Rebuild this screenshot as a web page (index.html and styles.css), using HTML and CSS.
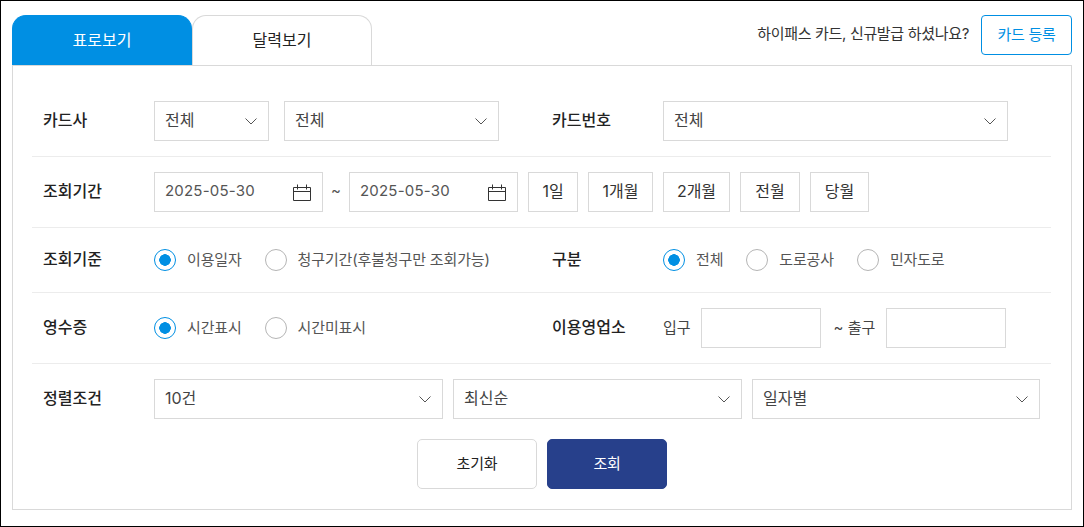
FILE: index.html
```html
<!DOCTYPE html>
<html lang="ko">
<head>
<meta charset="utf-8">
<title>하이패스 이용내역 조회</title>
<link rel="stylesheet" href="styles.css">
</head>
<body>
<svg class="defs" width="0" height="0" aria-hidden="true">
  <symbol id="chev" viewBox="0 0 12 7"><path d="M.5.5 6 6 11.500.5" fill="none" stroke="#555" stroke-width="1"/></symbol>
  <symbol id="cal" viewBox="0 0 18 17"><path d="M.5 3.500h17v13H.5zM.5 7.500h17M4.500 .5v5M13.500 .5v5" fill="none" stroke="#333" stroke-width="1"/></symbol>
</svg>
<main class="page">
  <header class="top">
    <nav class="tabs">
      <span class="tab tab-on">표로보기</span>
      <span class="tab">달력보기</span>
    </nav>
    <div class="notice">
      <span class="notice-text">하이패스 카드, 신규발급 하셨나요?</span>
      <span class="register">카드 등록</span>
    </div>
  </header>
  <section class="panel">
    <div class="row row-two">
      <div class="field">
        <span class="label">카드사</span>
        <div class="select w115">전체<svg class="chev"><use href="#chev"/></svg></div>
        <div class="select w215">전체<svg class="chev"><use href="#chev"/></svg></div>
      </div>
      <div class="field">
        <span class="label">카드번호</span>
        <div class="select w345">전체<svg class="chev"><use href="#chev"/></svg></div>
      </div>
    </div>
    <div class="row">
      <div class="field">
        <span class="label">조회기간</span>
        <div class="date">2025-05-30<svg class="cal"><use href="#cal"/></svg></div>
        <span class="tilde">~</span>
        <div class="date">2025-05-30<svg class="cal"><use href="#cal"/></svg></div>
        <span class="chip w50">1일</span>
        <span class="chip w65">1개월</span>
        <span class="chip w67">2개월</span>
        <span class="chip w60">전월</span>
        <span class="chip w59">당월</span>
      </div>
    </div>
    <div class="row row-two row-radio">
      <div class="field">
        <span class="label">조회기준</span>
        <span class="radio radio-on"><i></i>이용일자</span>
        <span class="radio"><i></i>청구기간(후불청구만 조회가능)</span>
      </div>
      <div class="field">
        <span class="label">구분</span>
        <span class="radio radio-on"><i></i>전체</span>
        <span class="radio"><i></i>도로공사</span>
        <span class="radio"><i></i>민자도로</span>
      </div>
    </div>
    <div class="row row-two">
      <div class="field">
        <span class="label">영수증</span>
        <span class="radio radio-on"><i></i>시간표시</span>
        <span class="radio"><i></i>시간미표시</span>
      </div>
      <div class="field">
        <span class="label">이용영업소</span>
        <span class="plain">입구</span>
        <span class="input"></span>
        <span class="plain plain-exit">~ 출구</span>
        <span class="input"></span>
      </div>
    </div>
    <div class="row row-last">
      <div class="field">
        <span class="label">정렬조건</span>
        <div class="select w289">10건<svg class="chev"><use href="#chev"/></svg></div>
        <div class="select w289">최신순<svg class="chev"><use href="#chev"/></svg></div>
        <div class="select w288">일자별<svg class="chev"><use href="#chev"/></svg></div>
      </div>
    </div>
    <div class="actions">
      <span class="btn">초기화</span>
      <span class="btn btn-main">조회</span>
    </div>
  </section>
</main>
</body>
</html>
```
FILE: styles.css
```css
* { box-sizing: border-box; }
html, body { margin: 0; height: 100%; overflow: hidden; background: #fff; }
body {
  font-family: Inter, "Noto Sans CJK KR", sans-serif;
  font-size: 15px;
  color: #333;
}
.defs { position: absolute; }
.page {
  width: 1084px;
  height: 527px;
  border: 1px solid #000;
  padding: 14px 11px 0;
}
.top { display: flex; justify-content: space-between; height: 50px; }
.tabs { display: flex; }
.tab {
  width: 180px;
  height: 51px;
  display: flex;
  align-items: center;
  justify-content: center;
  padding-bottom: 5px;
  border: 1px solid #d9d9d9;
  border-bottom: 0;
  border-radius: 14px 14px 0 0;
  background: #fff;
  color: #222;
  font-size: 16px;
}
.tab-on {
  background: #008fe3;
  border-color: #008fe3;
  color: #fff;
}
.notice { display: flex; gap: 12px; height: 40px; align-items: center; }
.notice-text { color: #333; letter-spacing: -0.32px; padding-bottom: 5px; }
.register {
  width: 91px;
  height: 40px;
  display: flex;
  align-items: center;
  justify-content: center;
  padding-bottom: 4px;
  border: 1px solid #008fe3;
  border-radius: 4px;
  color: #008fe3;
  letter-spacing: -0.3px;
}
.panel {
  height: 445px;
  margin-top: 0;
  padding: 20px 20px 0 19px;
  border: 1px solid #d9d9d9;
  position: relative;
  background: #fff;
}
.row {
  padding: 15px 0 15px 11px;
  border-bottom: 1px solid #ececec;
}
.row-two { display: grid; grid-template-columns: 509px 1fr; }
.row-radio { padding-top: 20px; padding-bottom: 20px; }
.row-radio .field { height: 24px; }
.row-last { border-bottom: 0; padding-bottom: 0; }
.field { display: flex; align-items: center; gap: 10px; }
.row-two .field { gap: 15px; }
.label {
  width: 111px;
  margin-right: -10px;
  padding-bottom: 4px;
  flex: none;
  font-size: 16px;
  font-weight: 500;
  color: #222;
}
.row-two .label { margin-right: -15px; }
.select, .date, .input, .chip {
  height: 40px;
  border: 1px solid #d9d9d9;
  background: #fff;
  display: flex;
  align-items: center;
  flex: none;
  padding-bottom: 4px;
}
.select, .date {
  justify-content: space-between;
  padding-left: 10px;
  padding-right: 11px;
  color: #444;
  font-size: 16px;
}
.w115 { width: 115px; }
.w215 { width: 215px; }
.w345 { width: 345px; }
.w289 { width: 289px; }
.w288 { width: 288px; }
.chev { width: 12px; height: 7px; flex: none; margin-top: 4px; }
.date { width: 169px; font-size: 15px; letter-spacing: 0.2px; color: #555; }
.cal { width: 18px; height: 17px; flex: none; margin-top: 4px; }
.tilde { color: #555; margin: 0 -5px; width: 16px; text-align: center; padding-bottom: 4px; }
.chip { justify-content: center; color: #333; font-size: 16px; }
.w50 { width: 50px; }
.w65 { width: 65px; }
.w67 { width: 67px; }
.w60 { width: 60px; }
.w59 { width: 59px; }
.radio {
  display: flex;
  align-items: center;
  gap: 11px;
  height: 24px;
  padding-bottom: 4px;
  color: #555;
  margin-right: 8px;
  letter-spacing: -0.15px;
}
.radio i {
  width: 22px;
  height: 22px;
  margin-top: 4px;
  border: 1px solid #b5b5b5;
  border-radius: 50%;
  flex: none;
  background: #fff;
}
.radio-on i {
  border-color: #008fe3;
  background: radial-gradient(circle, #008fe3 0 5.5px, #fff 6px);
}
.plain { color: #444; margin-right: -5px; padding-bottom: 4px; }
.plain-exit { margin-left: -2px; margin-right: -4px; }
.input { width: 120px; }
.actions { display: flex; justify-content: center; gap: 10px; margin: 20px 0 0 1px; }
.btn {
  width: 120px;
  height: 50px;
  display: flex;
  align-items: center;
  justify-content: center;
  padding-bottom: 4px;
  border: 1px solid #d9d9d9;
  border-radius: 5px;
  color: #222;
  letter-spacing: -0.2px;
}
.btn-main { background: #27408b; border-color: #27408b; color: #fff; }
```
